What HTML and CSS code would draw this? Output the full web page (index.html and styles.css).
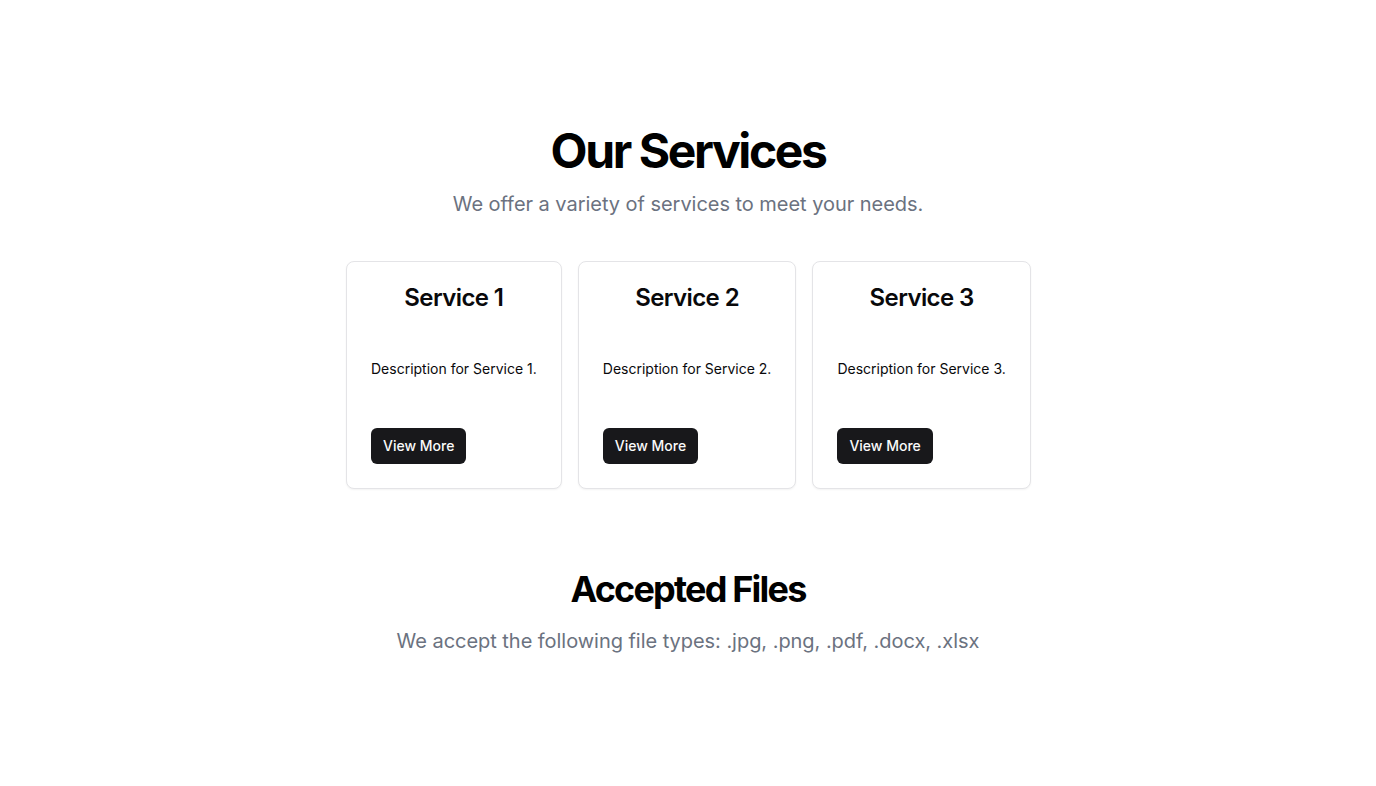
FILE: index.html
```html
<!DOCTYPE html>
<html lang="en">
<head>
<meta charset="utf-8">
<title>Our Services</title>
<link rel="stylesheet" href="styles.css">
</head>
<body>
<main class="page">
  <section class="services">
    <h1 class="title">Our Services</h1>
    <p class="subtitle">We offer a variety of services to meet your needs.</p>
    <div class="cards">
      <div class="card">
        <h3 class="card-title">Service 1</h3>
        <p class="card-desc">Description for Service 1.</p>
        <button class="btn">View More</button>
      </div>
      <div class="card">
        <h3 class="card-title">Service 2</h3>
        <p class="card-desc">Description for Service 2.</p>
        <button class="btn">View More</button>
      </div>
      <div class="card">
        <h3 class="card-title">Service 3</h3>
        <p class="card-desc">Description for Service 3.</p>
        <button class="btn">View More</button>
      </div>
    </div>
  </section>
  <section class="files">
    <h2 class="title-sm">Accepted Files</h2>
    <p class="subtitle subtitle-files">We accept the following file types: .jpg, .png, .pdf, .docx, .xlsx</p>
  </section>
</main>
</body>
</html>
```

FILE: styles.css
```css
* { box-sizing: border-box; }
html, body {
  margin: 0;
  padding: 0;
  background: #ffffff;
  font-family: Inter, "Liberation Sans", sans-serif;
  color: #09090b;
}
.page {
  display: flex;
  flex-direction: column;
  align-items: center;
  padding-top: 127px;
}
.services, .files {
  display: flex;
  flex-direction: column;
  align-items: center;
  text-align: center;
}
.title {
  margin: 0;
  font-size: 48px;
  line-height: 1;
  font-weight: 700;
  letter-spacing: -0.05em;
  color: #000;
}
.subtitle {
  margin: 15px 0 0;
  font-size: 20px;
  line-height: 28px;
  letter-spacing: -0.002em;
  color: #6b7280;
}
.cards {
  display: grid;
  grid-template-columns: repeat(3, 1fr);
  width: 684px;
  gap: 16px;
  margin-top: 43px;
}
.card {
  height: 228px;
  border: 1px solid #e4e4e7;
  border-radius: 8px;
  background: #fff;
  box-shadow: 0 1px 2px rgba(0,0,0,0.05);
  padding: 24px;
  display: flex;
  flex-direction: column;
  align-items: center;
}
.card-title {
  margin: 0;
  font-size: 24px;
  line-height: 1;
  font-weight: 600;
  letter-spacing: -0.025em;
  color: #09090b;
}
.card-desc {
  margin: 49px 0 0;
  font-size: 14px;
  line-height: 20px;
  white-space: nowrap;
  color: #09090b;
}
.btn {
  align-self: flex-start;
  margin-top: 49px;
  height: 36px;
  padding: 0 12px 1px;
  border: none;
  border-radius: 6px;
  background: #18181b;
  color: #fafafa;
  font-family: Inter, "Liberation Sans", sans-serif;
  font-size: 14px;
  font-weight: 500;
  cursor: pointer;
}
.files {
  margin-top: 80px;
}
.title-sm {
  margin: 0;
  font-size: 36px;
  line-height: 40px;
  font-weight: 700;
  letter-spacing: -0.05em;
  color: #000;
}
.subtitle-files {
  margin-top: 18px;
}
```
